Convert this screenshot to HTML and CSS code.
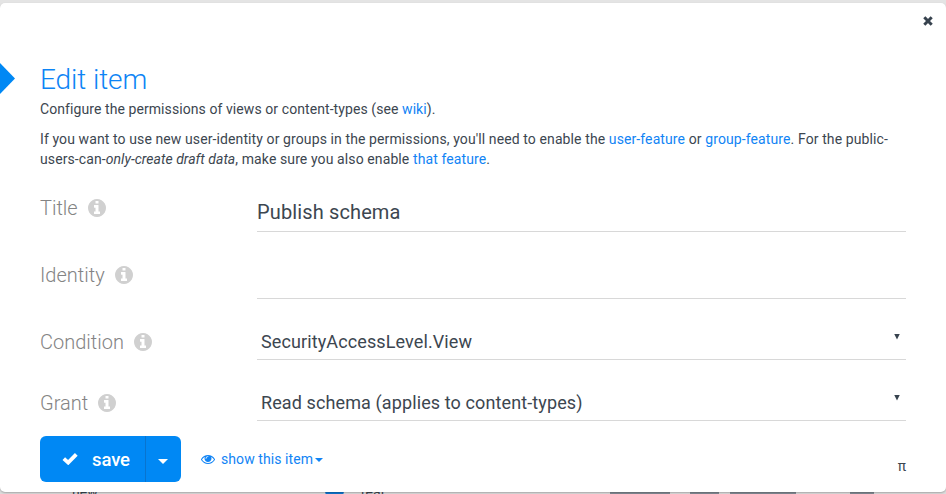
FILE: index.html
```html
<!DOCTYPE html>
<html lang="en">
<head>
<meta charset="utf-8">
<title>Edit item</title>
<link rel="stylesheet" href="styles.css">
</head>
<body>
<svg class="defs" aria-hidden="true">
  <symbol id="info" viewBox="0 0 1536 1536"><path d="M1024 1248v-160q0-14-9-23t-23-9h-96V544q0-14-9-23t-23-9H544q-14 0-23 9t-9 23v160q0 14 9 23t23 9h96v320h-96q-14 0-23 9t-9 23v160q0 14 9 23t23 9h448q14 0 23-9t9-23zM896 352V192q0-14-9-23t-23-9H672q-14 0-23 9t-9 23v160q0 14 9 23t23 9h192q14 0 23-9t9-23zM1536 768q0 209-103 385.500T1153.500 1433 768 1536t-385.500-103T103 1153.500 0 768t103-385.500T382.500 103 768 0t385.500 103T1433 382.500 1536 768z"/></symbol>
</svg>
<div class="page-behind">
  <span class="behind-new">new</span><i class="behind-dot"></i><span class="behind-real">real</span>
  <i class="tool tool-a"></i><i class="tool tool-b"></i><i class="tool tool-c"></i><i class="tool tool-d"></i>
</div>
<main class="dialog">
  <i class="marker"></i>
  <button class="close" aria-label="Close"><svg viewBox="0 0 10 10"><path d="M1.300 1.300 8.700 8.700M8.700 1.300 1.300 8.700"/></svg></button>
  <h1>Edit item</h1>
  <p>Configure the permissions of views or content-types (see <a>wiki</a>).</p>
  <p class="hint">If you want to use new user-identity or groups in the permissions, you'll need to enable the <a>user-feature</a> or <a>group-feature</a>. For the public-users-can-<em>only-create draft data</em>, make sure you also enable <a>that feature</a>.</p>
  <form class="fields">
    <div class="row row-title"><label>Title<svg class="info"><use href="#info"/></svg></label><div class="value">Publish schema</div></div>
    <div class="row row-identity"><label>Identity<svg class="info"><use href="#info"/></svg></label><div class="value"></div></div>
    <div class="row row-select"><label>Condition<svg class="info"><use href="#info"/></svg></label><div class="value">SecurityAccessLevel.View<i class="arrow"></i></div></div>
    <div class="row row-select"><label>Grant<svg class="info"><use href="#info"/></svg></label><div class="value">Read schema (applies to content-types)<i class="arrow"></i></div></div>
  </form>
  <footer>
    <div class="save">
      <span class="save-main"><svg class="check" viewBox="0 0 16 13"><path d="M1.800 6.600 6.200 10.600 14.300 2.300"/></svg>save</span>
      <span class="save-more"><i class="caret"></i></span>
    </div>
    <a class="show"><svg class="eye" viewBox="0 0 1792 1152"><path d="M1664 576Q1512 340 1283 223q61 104 61 225 0 185-131.500 316.500T896 896 579.500 764.500 448 448q0-121 61-225-229 117-381 353 133 205 333.500 326.500T896 1024t434.500-121.500T1664 576zM944 192q0-20-14-34t-34-14q-125 0-214.500 89.500T592 448q0 20 14 34t34 14 34-14 14-34q0-86 61-147t147-61q20 0 34-14t14-34zM1792 576q0 34-20 69-140 230-376.500 368.500T896 1152 396.500 1013 20 645Q0 610 0 576t20-69q140-229 376.500-368T896 0t499.500 139T1772 507q20 35 20 69z"/></svg>show this item<i class="caret"></i></a>
    <span class="pi">π</span>
  </footer>
</main>
</body>
</html>
```
FILE: styles.css
```css
* { box-sizing: border-box; }
body {
  margin: 0;
  height: 494px;
  padding-top: 3px;
  overflow: hidden;
  background: #e4e4e4;
  color: #3c4650;
  font: 14px/20px Roboto, "Liberation Sans", sans-serif;
}
.defs { position: absolute; width: 0; height: 0; }
.dialog {
  position: relative;
  height: 489px;
  padding: 60px 40px 0;
  background: #fff;
  border-radius: 5px;
  box-shadow: 0 1px 2px rgba(0, 0, 0, .25);
}
.marker {
  position: absolute;
  left: 0;
  top: 60px;
  width: 15px;
  height: 31px;
  background: #0088f4;
  clip-path: polygon(0 0, 100% 50%, 0 100%);
}
.close {
  position: absolute;
  top: 13px;
  right: 13px;
  width: 10px;
  height: 10px;
  padding: 0;
  border: 0;
  background: none;
}
.close svg { display: block; width: 10px; height: 10px; }
.close path { stroke: #37424e; stroke-width: 3; }
h1 {
  margin: 0 0 3px;
  color: #0d84f5;
  font-size: 28px;
  line-height: 33px;
  font-weight: 300;
  letter-spacing: -.08px;
}
p { margin: 0 0 10px; letter-spacing: .08px; }
.hint { letter-spacing: .104px; }
.hint em { letter-spacing: .03px; }
a { color: #1184f5; }
.row {
  display: grid;
  grid-template-columns: 217px 1fr;
}
.row label {
  display: flex;
  align-items: center;
  height: 28px;
  color: #848484;
  font-size: 20px;
  font-weight: 300;
}
.info { width: 18px; height: 18px; margin-left: 10px; fill: #d0d0d0; }
.value {
  display: flex;
  align-items: center;
  border-bottom: 1px solid #d8d8d8;
  font-size: 20px;
  letter-spacing: .13px;
}
.row-title { height: 53px; padding-top: 16px; }
.row-title label { height: 26px; }
.row-title .value { padding-bottom: 2px; }
.row-identity { height: 67px; padding-top: 29px; }
.row-select { height: 61px; padding-top: 29px; }
.row-select .value { padding: 0 6px 4px 4px; font-size: 18px; letter-spacing: .11px; }
.arrow {
  width: 6px;
  height: 6px;
  margin: 0 0 10px auto;
  background: #37424e;
  clip-path: polygon(0 0, 100% 0, 50% 100%);
}
footer { display: flex; align-items: center; height: 46px; margin-top: 15px; }
.save {
  display: flex;
  width: 141px;
  height: 46px;
  background: #0088f4;
  border-radius: 6px;
  color: #fff;
  font-size: 18.500px;
  font-weight: 500;
  letter-spacing: -.1px;
}
.save-main { display: flex; align-items: center; width: 105px; padding: 2px 0 0 22px; }
.check { width: 16px; height: 13px; margin: 0 14px 3px 0; fill: none; stroke: #fff; stroke-width: 3.800; }
.save-more {
  display: flex;
  align-items: center;
  flex: 1;
  padding: 4px 0 0 12px;
  border-left: 1px solid #0874cf;
}
.caret { width: 0; border: solid transparent; border-width: 4px 4px 0; border-top-color: currentColor; }
.save .caret { border-width: 5px 5px 0; }
.show { display: flex; align-items: center; margin-left: 20px; letter-spacing: .07px; }
.eye { width: 14px; height: 9px; margin-right: 6px; fill: #1184f5; }
.show .caret { margin: 2px 0 0 2px; }
.pi { margin: 13px 0 0 auto; }
.page-behind {
  position: absolute;
  left: 0;
  top: 481px;
  width: 946px;
  height: 13px;
  overflow: hidden;
  background: #ddd;
}
.behind-new, .behind-real { position: absolute; top: 1px; }
.behind-new { left: 72px; }
.behind-real { left: 361px; }
.behind-dot { position: absolute; left: 325px; top: 0; width: 19px; height: 19px; border-radius: 50%; background: #0d75cf; }
.tool { position: absolute; top: 8px; height: 5px; background: #838b94; }
.tool-a { left: 610px; width: 60px; }
.tool-b { left: 690px; width: 29px; }
.tool-c { left: 730px; width: 66px; }
.tool-d { left: 850px; width: 24px; }
```
